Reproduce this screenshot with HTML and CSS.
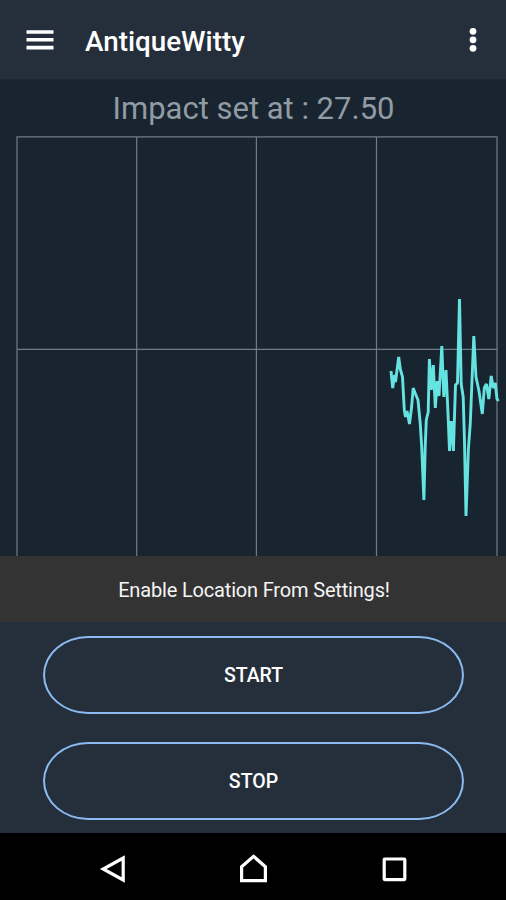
FILE: index.html
```html
<!DOCTYPE html>
<html lang="en">
<head>
<meta charset="utf-8">
<title>AntiqueWitty</title>
<link rel="stylesheet" href="styles.css">
</head>
<body>
<header class="app-bar">
  <svg class="menu" viewBox="0 0 28 20"><path d="M.5 2h27M.5 9.8h27M.5 17.6h27"/></svg>
  <h1 class="title">AntiqueWitty</h1>
  <svg class="more" viewBox="0 0 8 24"><circle cx="4" cy="3.3" r="3.4"/><circle cx="4" cy="11.8" r="3.4"/><circle cx="4" cy="20.3" r="3.4"/></svg>
</header>
<main class="chart-panel">
  <p class="impact"><span>Impact set at : 27.50</span></p>
  <svg class="chart" viewBox="0 136 506 420">
    <path class="grid" d="M17 556V136.8H497V556M136.7 137V556M256.4 137V556M376.5 137V556M17 349.4H497"/>
    <path class="signal" d="M391 371L392.7 388L394.6 375L395.5 382L398.7 357L400.3 369L402.5 377L404.3 410L405.5 417L407 411L409.5 424L411.6 407L413.2 388L415.5 394L418 400L420.2 423L421.7 447L423.9 500L425.2 447L426.3 420L428.2 412L429.4 359L431.3 390L433.3 365L435.3 408L437.2 381L439 396L441.8 346L443.8 397L446 370L448.2 418L449.5 451L451.3 421L453.4 451L455.5 385L457.5 383L459.5 299L461.2 384L463.2 397L464.5 442L466 516L468.4 449L470.3 423L471.7 388L473.8 336L476 377L479 391L482.3 414L484.3 388L486.4 384L488.8 399L491.2 376L493.3 388L495.3 383L497 399L498.5 401"/>
  </svg>
</main>
<div class="snackbar"><span>Enable Location From Settings!</span></div>
<section class="actions">
  <button class="action"><span>START</span></button>
  <button class="action"><span>STOP</span></button>
</section>
<nav class="system-nav">
  <svg viewBox="0 0 30 30"><path d="M26.2 4V26L6.2 15Z"/></svg>
  <svg viewBox="0 0 30 30"><path d="M3.6 12.8L15.6 2.4L27.4 12.8V26.7H3.6Z"/></svg>
  <svg viewBox="0 0 30 30"><rect x="5.2" y="5" width="20.6" height="20.6" rx=".5"/></svg>
</nav>
</body>
</html>
```
FILE: styles.css
```css
* {
  box-sizing: border-box;
}

body {
  margin: 0;
  height: 900px;
  display: flex;
  flex-direction: column;
  overflow: hidden;
  background: #252f3b;
  font-family: Roboto, sans-serif;
}

.app-bar {
  flex: 0 0 80px;
  display: flex;
  align-items: center;
  padding: 0 29px 0 26px;
  border-bottom: 1px solid #1b2731;
  background: #252f3b;
  color: #fff;
}

.menu {
  width: 28px;
  height: 20px;
  stroke: #fff;
  stroke-width: 3.6;
}

.title {
  margin: 4px auto 0 31px;
  font-size: 27.8px;
  font-weight: 500;
  line-height: 34px;
  white-space: nowrap;
}

.more {
  width: 8px;
  height: 24px;
  fill: #fff;
}

.chart-panel {
  flex: 0 0 476px;
  background: #182530;
}

.impact {
  margin: 0;
  height: 56px;
  padding-left: 1px;
  line-height: 58px;
  text-align: center;
  font-size: 31px;
  color: #929ba4;
}

.chart {
  display: block;
  width: 506px;
  height: 420px;
  fill: none;
}

.grid {
  stroke: #6e7d87;
  stroke-width: 1.2;
}

.signal {
  stroke: #65e3e0;
  stroke-width: 2.9;
  stroke-linejoin: bevel;
}

.snackbar {
  flex: 0 0 66px;
  background: #333;
  color: #f5f5f5;
  font-size: 20px;
  letter-spacing: -0.17px;
  line-height: 64px;
  text-align: center;
  padding: 2px 0 0 2px;
}

.actions {
  flex: 0 0 211px;
  display: flex;
  flex-direction: column;
  gap: 28px;
  padding: 14px 42px 0 43px;
}

.action {
  flex: 0 0 78px;
  padding: 0;
  border: 2px solid #8abaf0;
  border-radius: 45px / 39px;
  background: none;
  color: #fff;
  font: 500 19.5px Roboto, sans-serif;
}

.system-nav {
  flex: 0 0 67px;
  display: flex;
  justify-content: center;
  gap: 111px;
  padding-top: 21px;
  background: #000;
}

.system-nav svg {
  width: 30px;
  height: 30px;
  fill: none;
  stroke: #fff;
  stroke-width: 3.2;
}
```
